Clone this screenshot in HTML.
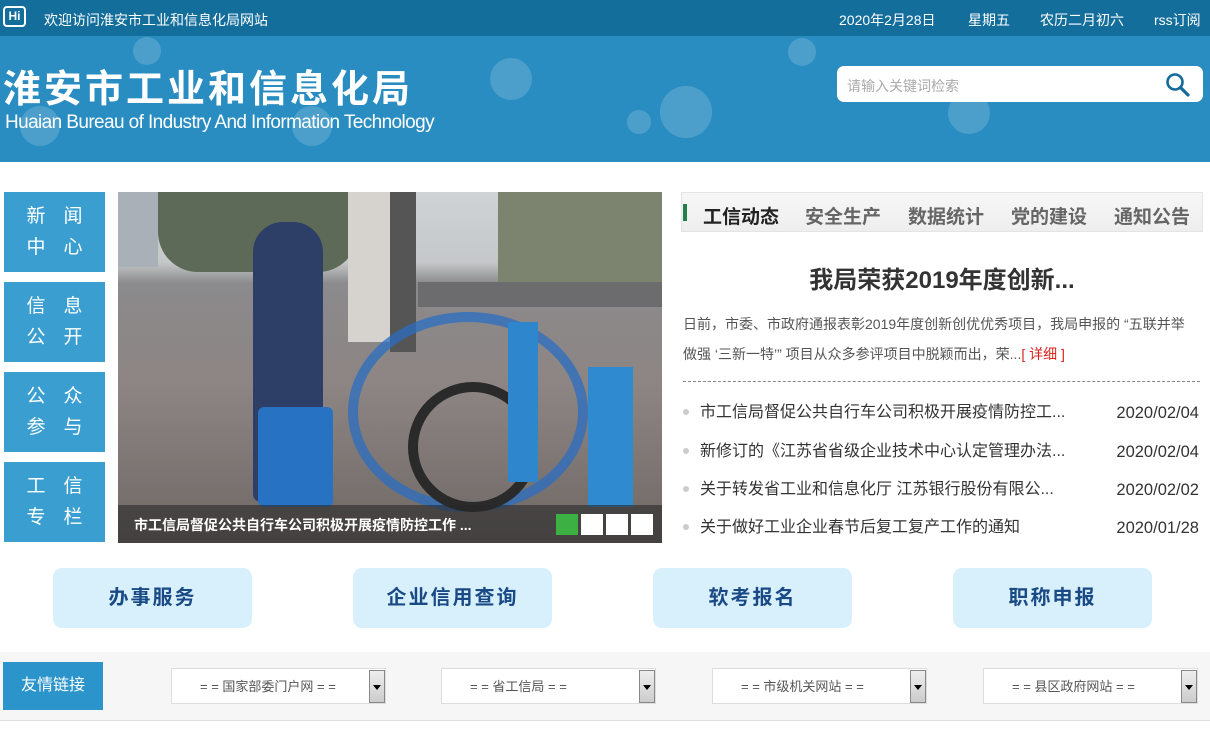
<!DOCTYPE html>
<html><head><meta charset="utf-8"><style>
*{margin:0;padding:0;box-sizing:border-box}
body{width:1210px;height:744px;overflow:hidden;background:#fff;font-family:"Liberation Sans","Microsoft YaHei","Noto Sans CJK SC",sans-serif;position:relative}
.a{position:absolute}
.top{left:0;top:0;width:1210px;height:36px;background:#136e9c;color:#fff;font-size:14px}
.hdr{left:0;top:36px;width:1210px;height:126px;background:#2a8dc2;overflow:hidden}
.bub{position:absolute;border-radius:50%;background:rgba(255,255,255,.16)}
.tile{left:4px;width:101px;height:80px;background:#3a9fd0;color:#fff;font-size:19px;line-height:31px;text-align:center;padding-top:9px;letter-spacing:18px;padding-left:18px}
.tab{top:192px;left:681px;width:522px;height:40px;background:linear-gradient(#f7f7f7,#eeeeee);border:1px solid #e4e4e4;font-size:19px;font-weight:bold;color:#666}
.li{left:683px;width:518px;font-size:16px;color:#333;height:20px;line-height:20px}
.li:before{content:"";position:absolute;left:0;top:6px;width:6px;height:6px;border-radius:50%;background:#ccc}
.li span{position:absolute;left:17px}
.li i{position:absolute;right:2px;font-style:normal;font-size:16.5px}
.btn{top:568px;width:199px;height:60px;background:#d8f0fb;border-radius:9px;color:#1a4a86;font-size:20px;font-weight:bold;text-align:center;line-height:60px;letter-spacing:2px}
.sel{top:668px;width:215px;height:36px;background:#fff;border:1px solid #ddd;font-size:13px;color:#555;line-height:36px;padding-left:28px}
.sel b{position:absolute;right:0;top:1px;width:16px;height:33px;background:linear-gradient(#eee,#ccc);border:1px solid #888}
.sel b:after{content:"";position:absolute;left:3px;top:14px;border:4px solid transparent;border-top:5px solid #000}
</style></head><body>
<div class="a top">
<div class="a" style="left:3px;top:6px;width:23px;height:21px;border:2px solid #fff;border-radius:4px;font-size:12px;font-weight:bold;line-height:17px;text-align:center">Hi</div>
<div class="a" style="left:44px;top:10px">欢迎访问淮安市工业和信息化局网站</div>
<div class="a" style="left:839px;top:10px">2020年2月28日</div>
<div class="a" style="left:968px;top:10px">星期五</div>
<div class="a" style="left:1040px;top:10px">农历二月初六</div>
<div class="a" style="left:1154px;top:10px">rss订阅</div>
</div>
<div class="a hdr">
<div class="bub" style="left:133px;top:1px;width:28px;height:28px"></div>
<div class="bub" style="left:490px;top:22px;width:42px;height:42px"></div>
<div class="bub" style="left:660px;top:50px;width:52px;height:52px"></div>
<div class="bub" style="left:627px;top:74px;width:24px;height:24px"></div>
<div class="bub" style="left:788px;top:2px;width:28px;height:28px"></div>
<div class="bub" style="left:948px;top:56px;width:42px;height:42px"></div>
<div class="bub" style="left:292px;top:70px;width:40px;height:40px"></div>
<div class="bub" style="left:20px;top:70px;width:40px;height:40px"></div>
<div class="a" style="left:3px;top:22px;color:#fff;font-size:38px;font-weight:bold;letter-spacing:3px">淮安市工业和信息化局</div>
<div class="a" style="left:5px;top:76px;color:#fff;font-size:19px;letter-spacing:-0.6px">Huaian Bureau of Industry And Information Technology</div>
<div class="a" style="left:837px;top:30px;width:366px;height:36px;background:#fff;border-radius:7px">
<div class="a" style="left:10px;top:10px;font-size:14px;color:#aaa">请输入关键词检索</div>
<svg class="a" style="left:328px;top:6px" width="26" height="26" viewBox="0 0 26 26"><circle cx="10" cy="10" r="7.5" fill="none" stroke="#146a9a" stroke-width="2.6"/><path d="M15.5 15.5L23 23" stroke="#146a9a" stroke-width="3.2" stroke-linecap="round"/></svg>
</div>
</div>

<div class="a tile" style="top:192px">新闻<br>中心</div>
<div class="a tile" style="top:282px">信息<br>公开</div>
<div class="a tile" style="top:372px">公众<br>参与</div>
<div class="a tile" style="top:462px">工信<br>专栏</div>

<div class="a" style="left:118px;top:192px;width:544px;height:351px;overflow:hidden;background:linear-gradient(#cfd3d6 0,#c5c8c9 20%,#8b8a8c 26%,#8d8583 55%,#6e6865 100%)">
<div class="a" style="left:0;top:0;width:40px;height:75px;background:#a9b0b8"></div>
<div class="a" style="left:40px;top:0;width:200px;height:80px;background:#5d6a58;border-radius:0 0 40px 40px"></div>
<div class="a" style="left:380px;top:0;width:164px;height:90px;background:#7c8470"></div>
<div class="a" style="left:230px;top:0;width:60px;height:150px;background:#d6d3cf"></div>
<div class="a" style="left:272px;top:0;width:26px;height:160px;background:#555"></div>
<div class="a" style="left:300px;top:90px;width:244px;height:25px;background:#6c6b6e"></div>
<div class="a" style="left:135px;top:30px;width:70px;height:280px;background:#2d3f66;border-radius:30px 30px 8px 8px"></div>
<div class="a" style="left:140px;top:215px;width:75px;height:100px;background:#2872c4;border-radius:6px"></div>
<div class="a" style="left:230px;top:120px;width:240px;height:200px;border:10px solid #2b6ec2;border-radius:50%;opacity:.75"></div>
<div class="a" style="left:290px;top:190px;width:130px;height:130px;border:10px solid #2a2a2a;border-radius:50%"></div>
<div class="a" style="left:470px;top:175px;width:45px;height:140px;background:#2f8ad0"></div>
<div class="a" style="left:390px;top:130px;width:30px;height:160px;background:#2e86cc"></div>
<div class="a" style="left:0;top:313px;width:544px;height:38px;background:rgba(40,40,40,.6)"></div>
<div class="a" style="left:16px;top:323px;color:#fff;font-size:14px;font-weight:bold">市工信局督促公共自行车公司积极开展疫情防控工作 ...</div>
<div class="a" style="left:438px;top:322px;width:22px;height:21px;background:#3cb043"></div>
<div class="a" style="left:463px;top:322px;width:22px;height:21px;background:#fff"></div>
<div class="a" style="left:488px;top:322px;width:22px;height:21px;background:#fff"></div>
<div class="a" style="left:513px;top:322px;width:22px;height:21px;background:#fff"></div>
</div>

<div class="a tab">
<div class="a" style="left:1px;top:11px;width:4px;height:17px;background:#22804a"></div>
<div class="a" style="left:21px;top:9px;color:#222">工信动态</div>
<div class="a" style="left:123px;top:9px">安全生产</div>
<div class="a" style="left:226px;top:9px">数据统计</div>
<div class="a" style="left:329px;top:9px">党的建设</div>
<div class="a" style="left:432px;top:9px">通知公告</div>
</div>
<div class="a" style="left:681px;top:260px;width:522px;text-align:center;font-size:24px;font-weight:bold;color:#333">我局荣获2019年度创新...</div>
<div class="a" style="left:683px;top:309px;width:530px;font-size:14px;color:#555;line-height:30px;white-space:nowrap">日前，市委、市政府通报表彰2019年度创新创优优秀项目，我局申报的 “五联并举<br>做强 ‘三新一特’” 项目从众多参评项目中脱颖而出，荣...<span style="color:#d9241c">[ 详细 ]</span></div>
<div class="a" style="left:683px;top:381px;width:517px;border-top:1px dashed #888"></div>
<div class="a li" style="top:403px"><span>市工信局督促公共自行车公司积极开展疫情防控工...</span><i>2020/02/04</i></div>
<div class="a li" style="top:442px"><span>新修订的《江苏省省级企业技术中心认定管理办法...</span><i>2020/02/04</i></div>
<div class="a li" style="top:480px"><span>关于转发省工业和信息化厅 江苏银行股份有限公...</span><i>2020/02/02</i></div>
<div class="a li" style="top:518px"><span>关于做好工业企业春节后复工复产工作的通知</span><i>2020/01/28</i></div>

<div class="a btn" style="left:53px">办事服务</div>
<div class="a btn" style="left:353px">企业信用查询</div>
<div class="a btn" style="left:653px">软考报名</div>
<div class="a btn" style="left:953px">职称申报</div>

<div class="a" style="left:0;top:652px;width:1210px;height:69px;background:#f6f6f6;border-bottom:1px solid #e2e2e2"></div>
<div class="a" style="left:3px;top:662px;width:100px;height:48px;background:#2b95cb;color:#fff;font-size:16px;line-height:48px;text-align:center">友情链接</div>
<div class="a sel" style="left:171px">= = 国家部委门户网 = =<b></b></div>
<div class="a sel" style="left:441px">= = 省工信局 = =<b></b></div>
<div class="a sel" style="left:712px">= = 市级机关网站 = =<b></b></div>
<div class="a sel" style="left:983px">= = 县区政府网站 = =<b></b></div>
</body></html>
